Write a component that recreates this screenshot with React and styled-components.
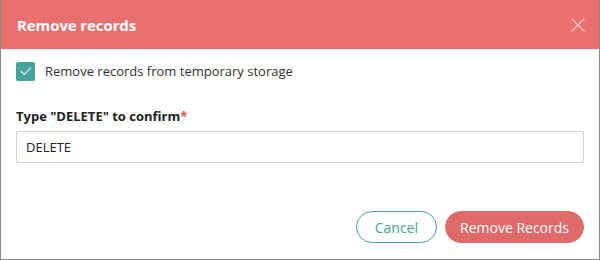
import { createGlobalStyle, styled } from "styled-components"

const GlobalStyle = createGlobalStyle`
  body {
    margin: 0;
    font-family: "Open Sans", "Noto Sans", sans-serif;
    background: #fff;
  }
`

const App = () => {
    return (
        <>
            <GlobalStyle />
            <Dialog>
                <Header>
                    <Title>Remove records</Title>
                    <Close aria-label="Close">
                        <svg width="14" height="14" viewBox="0 0 14 14">
                            <path d="M1 1L13 13M13 1L1 13" stroke="currentColor" strokeWidth="1.4" strokeLinecap="round" />
                        </svg>
                    </Close>
                </Header>

                <Body>
                    <CheckRow>
                        <Box>
                            <svg width="12" height="10" viewBox="0 0 12 10">
                                <path d="M1 5.2L4.3 8.4L11 1.6" fill="none" stroke="#d8efec" strokeWidth="1.3" />
                            </svg>
                        </Box>
                        <CheckText>Remove records from temporary storage</CheckText>
                    </CheckRow>

                    <Label>Type "DELETE" to confirm<Req>*</Req></Label>
                    <Input defaultValue="DELETE" />
                </Body>

                <Footer>
                    <Button>Cancel</Button>
                    <Button primary>Remove Records</Button>
                </Footer>
            </Dialog>
        </>
    )
}

export default App

const Dialog = styled.div`
    width: 600px;
    height: 260px;
    box-sizing: border-box;
    border: 1px solid #8a8a8a;
    border-top: none;
    display: flex;
    flex-direction: column;
    background: #fff;
`

const Header = styled.div`
    height: 49px;
    background-color: #ea7070;
    display: flex;
    align-items: center;
    justify-content: space-between;
    padding: 0 14px 0 16px;
    flex-shrink: 0;
`

const Title = styled.h2`
    margin: 0;
    color: #fff;
    font-size: 15px;
    font-weight: 700;
    letter-spacing: -0.1px;
`

const Close = styled.button`
    border: none;
    background: transparent;
    padding: 0;
    color: #f8c2c2;
    display: grid;
    place-items: center;
    cursor: pointer;
`

const Body = styled.div`
    padding: 12px 15px 0;
    display: flex;
    flex-direction: column;
`

const CheckRow = styled.label`
    display: flex;
    align-items: center;
    gap: 10px;
    height: 20px;
    cursor: pointer;
`

const Box = styled.span`
    width: 19px;
    height: 19px;
    border-radius: 2px;
    background-color: #45a399;
    display: grid;
    place-items: center;
`

const CheckText = styled.span`
    font-size: 13px;
    color: #333;
`

const Label = styled.div`
    margin-top: 26px;
    font-size: 13px;
    font-weight: 700;
    color: #222;
`

const Req = styled.span`
    color: #e24b4b;
`

const Input = styled.input`
    margin-top: 6px;
    height: 32px;
    box-sizing: border-box;
    border: 1px solid #d4d4d4;
    border-radius: 2px;
    padding: 0 9px;
    font-family: inherit;
    font-size: 13px;
    color: #222;
    &:focus { outline: none; }
`

const Footer = styled.div`
    margin-top: auto;
    padding: 0 15px 16px;
    display: flex;
    justify-content: flex-end;
    gap: 8px;
`

const Button = styled.button`
    height: 32px;
    padding: 0 ${p => p.primary ? "14px" : "18px"};
    border-radius: 999px;
    font-family: inherit;
    font-size: 14px;
    cursor: pointer;
    border: 1px solid ${p => p.primary ? "#e06a6a" : "#45a399"};
    background-color: ${p => p.primary ? "#e06a6a" : "#fff"};
    color: ${p => p.primary ? "#fff" : "#45a399"};
`
